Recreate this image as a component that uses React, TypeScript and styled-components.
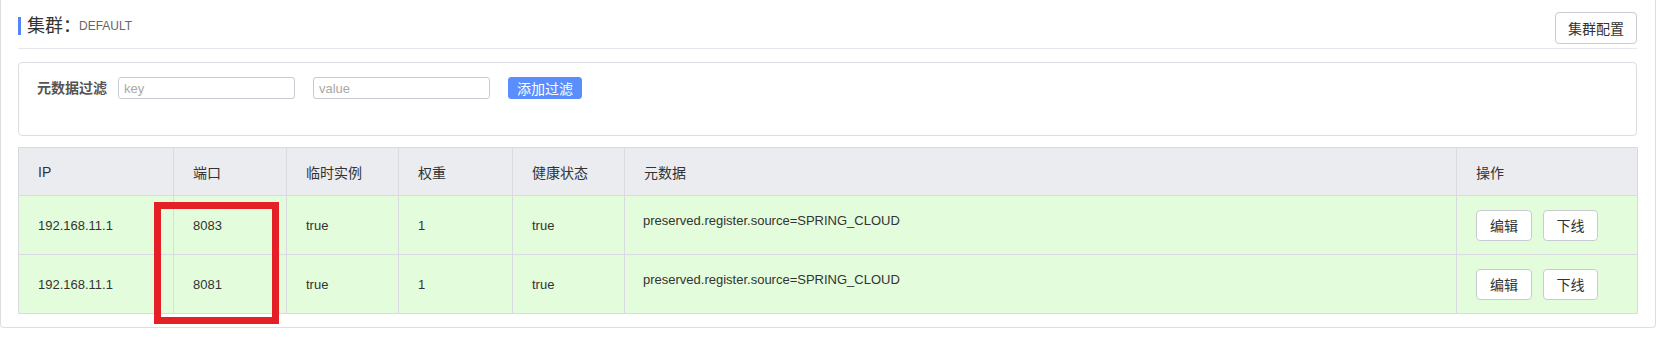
import React from 'react';
import styled, { createGlobalStyle } from 'styled-components';

const GlobalStyle = createGlobalStyle`
  body {
    margin: 0;
    background: #fff;
    font-family: "Liberation Sans", "Noto Sans CJK SC", sans-serif;
    color: #333;
  }
`;

const Card = styled.div`
  position: relative;
  width: 1656px;
  box-sizing: border-box;
  border: 1px solid #dcdee2;
  border-top: none;
  border-radius: 0 0 4px 4px;
  padding: 0 18px 13px 17px;
`;

const Header = styled.div`
  display: flex;
  justify-content: space-between;
  align-items: flex-start;
  padding: 12px 0 4px;
  border-bottom: 1px solid #e6e7ec;
`;

const Title = styled.div`
  margin-top: 5px;
  height: 18px;
  display: flex;
  align-items: center;
  border-left: 3px solid #5584ff;
  padding-left: 6px;
  font-size: 18px;
  line-height: 18px;
  color: #333;
`;

const TitleName = styled.span`
  margin-left: -2px;
  font-size: 12px;
  color: #666;
`;

const Button = styled.button<{ $primary?: boolean; $w: number; $h: number }>`
  width: ${p => p.$w}px;
  height: ${p => p.$h}px;
  box-sizing: border-box;
  padding: 0;
  font-family: "Liberation Sans", "Noto Sans CJK SC", sans-serif;
  font-size: 14px;
  border-radius: ${p => (p.$primary ? 3 : 4)}px;
  border: 1px solid ${p => (p.$primary ? '#5a8dfd' : '#c8cbd2')};
  background: ${p => (p.$primary ? '#5a8dfd' : '#fff')};
  color: ${p => (p.$primary ? '#fff' : '#333')};
  cursor: pointer;
`;

const FilterBox = styled.div`
  margin-top: 13px;
  height: 74px;
  box-sizing: border-box;
  border: 1px solid #dcdee2;
  border-radius: 4px;
  padding: 14px 18px;
  display: flex;
  align-items: flex-start;
`;

const FilterLabel = styled.label`
  font-size: 14px;
  line-height: 22px;
  font-weight: bold;
  color: #555;
  margin-right: 11px;
`;

const Input = styled.input`
  width: 177px;
  height: 22px;
  box-sizing: border-box;
  border: 1px solid #c8cbd2;
  border-radius: 3px;
  padding: 0 5px;
  margin-right: 18px;
  font-family: "Liberation Sans", sans-serif;
  font-size: 13px;
  color: #333;
  outline: none;

  &::placeholder {
    color: #a8a8a8;
  }
`;

const TableWrap = styled.div`
  position: relative;
  margin-top: 11px;
`;

const Table = styled.table`
  width: 1619px;
  border-collapse: collapse;
  table-layout: fixed;
`;

const Th = styled.th`
  height: 47px;
  padding: 0 18px 0 19px;
  text-align: left;
  font-weight: normal;
  font-size: 14px;
  color: #333;
  background: #ebecf0;
  border: 1px solid #d9dbe0;
`;

const Td = styled.td<{ $top?: boolean }>`
  height: ${p => (p.$top ? 41 : 58)}px;
  padding: ${p => (p.$top ? '17px 18px 0' : '0 18px 0 19px')};
  vertical-align: ${p => (p.$top ? 'top' : 'middle')};
  font-size: 13px;
  color: #333;
  background: #e3fcdb;
  border: 1px solid #d9dbe0;
`;

const Actions = styled.div`
  display: flex;
  gap: 11px;
`;

const Highlight = styled.div`
  position: absolute;
  left: 136px;
  top: 55px;
  width: 125px;
  height: 122px;
  box-sizing: border-box;
  border: 7px solid #e41f26;
  pointer-events: none;
`;

const columns = [
  { label: 'IP', width: 155 },
  { label: '端口', width: 113 },
  { label: '临时实例', width: 112 },
  { label: '权重', width: 114 },
  { label: '健康状态', width: 112 },
  { label: '元数据', width: 832 },
  { label: '操作', width: 181 },
];

const instances = [
  { ip: '192.168.11.1', port: 8083, ephemeral: 'true', weight: 1, healthy: 'true', meta: 'preserved.register.source=SPRING_CLOUD' },
  { ip: '192.168.11.1', port: 8081, ephemeral: 'true', weight: 1, healthy: 'true', meta: 'preserved.register.source=SPRING_CLOUD' },
];

export default function App() {
  return (
    <>
      <GlobalStyle />
      <Card>
        <Header>
          <Title>
            集群：<TitleName>DEFAULT</TitleName>
          </Title>
          <Button $w={82} $h={32}>集群配置</Button>
        </Header>

        <FilterBox>
          <FilterLabel>元数据过滤</FilterLabel>
          <Input placeholder="key" />
          <Input placeholder="value" />
          <Button $primary $w={74} $h={22}>添加过滤</Button>
        </FilterBox>

        <TableWrap>
          <Table>
            <colgroup>
              {columns.map(c => (
                <col key={c.label} style={{ width: c.width }} />
              ))}
            </colgroup>
            <thead>
              <tr>
                {columns.map(c => (
                  <Th key={c.label}>{c.label}</Th>
                ))}
              </tr>
            </thead>
            <tbody>
              {instances.map(row => (
                <tr key={row.port}>
                  <Td>{row.ip}</Td>
                  <Td>{row.port}</Td>
                  <Td>{row.ephemeral}</Td>
                  <Td>{row.weight}</Td>
                  <Td>{row.healthy}</Td>
                  <Td $top>{row.meta}</Td>
                  <Td>
                    <Actions>
                      <Button $w={56} $h={31}>编辑</Button>
                      <Button $w={55} $h={31}>下线</Button>
                    </Actions>
                  </Td>
                </tr>
              ))}
            </tbody>
          </Table>
          <Highlight />
        </TableWrap>
      </Card>
    </>
  );
}
